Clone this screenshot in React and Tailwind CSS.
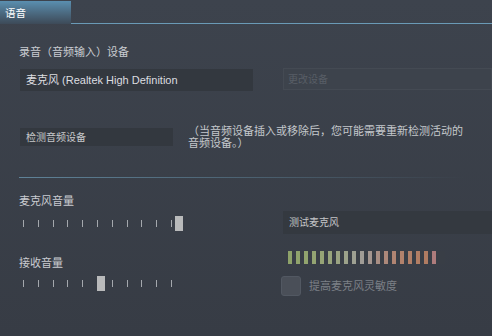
import React from 'react';

const METER_BARS = [
  'bg-[#8ea26a]', 'bg-[#90a36c]', 'bg-[#92a46e]', 'bg-[#94a472]', 'bg-[#96a476]',
  'bg-[#98a47c]', 'bg-[#9aa382]', 'bg-[#9ca28a]', 'bg-[#9ea092]', 'bg-[#a09c96]',
  'bg-[#a49690]', 'bg-[#a88e84]', 'bg-[#ac887a]', 'bg-[#b08472]', 'bg-[#b2826c]',
  'bg-[#b28068]', 'bg-[#b27e64]', 'bg-[#b07c62]', 'bg-[#ae7c7c]',
];

function Slider({ thumbLeft }) {
  return (
    <div className="relative h-[15px] w-[170px]">
      <div className="flex h-full w-[153px] items-center justify-between pl-[4px]">
        {Array.from({ length: 11 }).map((_, i) => (
          <span key={i} className="h-[7px] w-px bg-[#a4a8ad]" />
        ))}
      </div>
      <div className={`absolute top-0 h-[15px] w-[8px] bg-[#b9babb] ${thumbLeft}`} />
    </div>
  );
}

function Separator({ className }) {
  return <div className={`h-px bg-gradient-to-r from-[#5f8298] via-[#4c6272] to-transparent ${className}`} />;
}

export default function App() {
  return (
    <div className="h-[336px] w-[492px] overflow-hidden bg-gradient-to-b from-[#3d434d] to-[#373c45] font-['Liberation_Sans','Noto_Sans_CJK_SC',sans-serif] text-[#c9ccd1]">
      {/* tab bar */}
      <div className="flex h-[24px]">
        <div className="mt-px h-[23px] w-[71px] bg-gradient-to-b from-[#5a8fb0] to-[#3d4a58] pl-[5px] pt-[1px] text-[10.5px] leading-[22px] text-white">语音</div>
        <div className="flex-1 border-b border-[#6a9ab6]" />
      </div>

      <div className="pl-[19px]">
        <div className="mt-[22px] text-[11px] leading-[12px]">录音（音频输入）设备</div>

        <div className="mt-[10px] flex items-start">
          <div className="ml-[1px] mt-[1px] flex h-[22px] w-[233px] items-center bg-[#33383f] pl-[6px] text-[11px] text-[#dcdde0]">
            麦克风 (Realtek High Definition
          </div>
          <div className="ml-[30px] flex h-[22px] flex-1 items-center border border-[#444a53] bg-[#3d434c] pl-[4px] text-[10px] text-[#585e66]">
            更改设备
          </div>
        </div>

        <div className="mt-[37px] flex items-start">
          <div className="ml-[1px] flex h-[18px] w-[153px] items-center bg-[#33383f] pl-[6px] text-[10px] text-[#c8c9cb]">
            检测音频设备
          </div>
          <p className="ml-[15px] -mt-[3px] text-[11px] leading-[12px] text-[#c4c8cc]">
            （当音频设备插入或移除后，您可能需要重新检测活动的
            <br />
            音频设备。）
          </p>
        </div>

        <Separator className="mt-[28px] w-[446px]" />

        <div className="flex">
          <div className="w-[262px]">
            <div className="mt-[17px] text-[11px] leading-[12px]">麦克风音量</div>
            <div className="mt-[9px]">
              <Slider thumbLeft="left-[156px]" />
            </div>
            <div className="mt-[26px] text-[11px] leading-[12px]">接收音量</div>
            <div className="mt-[7px]">
              <Slider thumbLeft="left-[78px]" />
            </div>
          </div>

          <div className="flex-1">
            <div className="ml-[2px] mt-[33px] flex h-[23px] items-center bg-[#343940] pl-[6px] text-[10px] text-[#c4c5c7]">
              测试麦克风
            </div>
            <div className="ml-[7px] mt-[17px] flex h-[13px] w-[157px] gap-[4px] bg-[#393e46]">
              {METER_BARS.map((c, i) => (
                <span key={i} className={`h-full w-[4px] ${c}`} />
              ))}
            </div>
            <div className="mt-[12px] flex items-center gap-[8px]">
              <span className="h-[20px] w-[20px] rounded-[3px] border border-[#525862] bg-[#4a4f58]" />
              <span className="text-[11px] leading-[12px] text-[#7c8087]">提高麦克风灵敏度</span>
            </div>
          </div>
        </div>

        <Separator className="mt-[40px] w-[473px]" />
      </div>
    </div>
  );
}
